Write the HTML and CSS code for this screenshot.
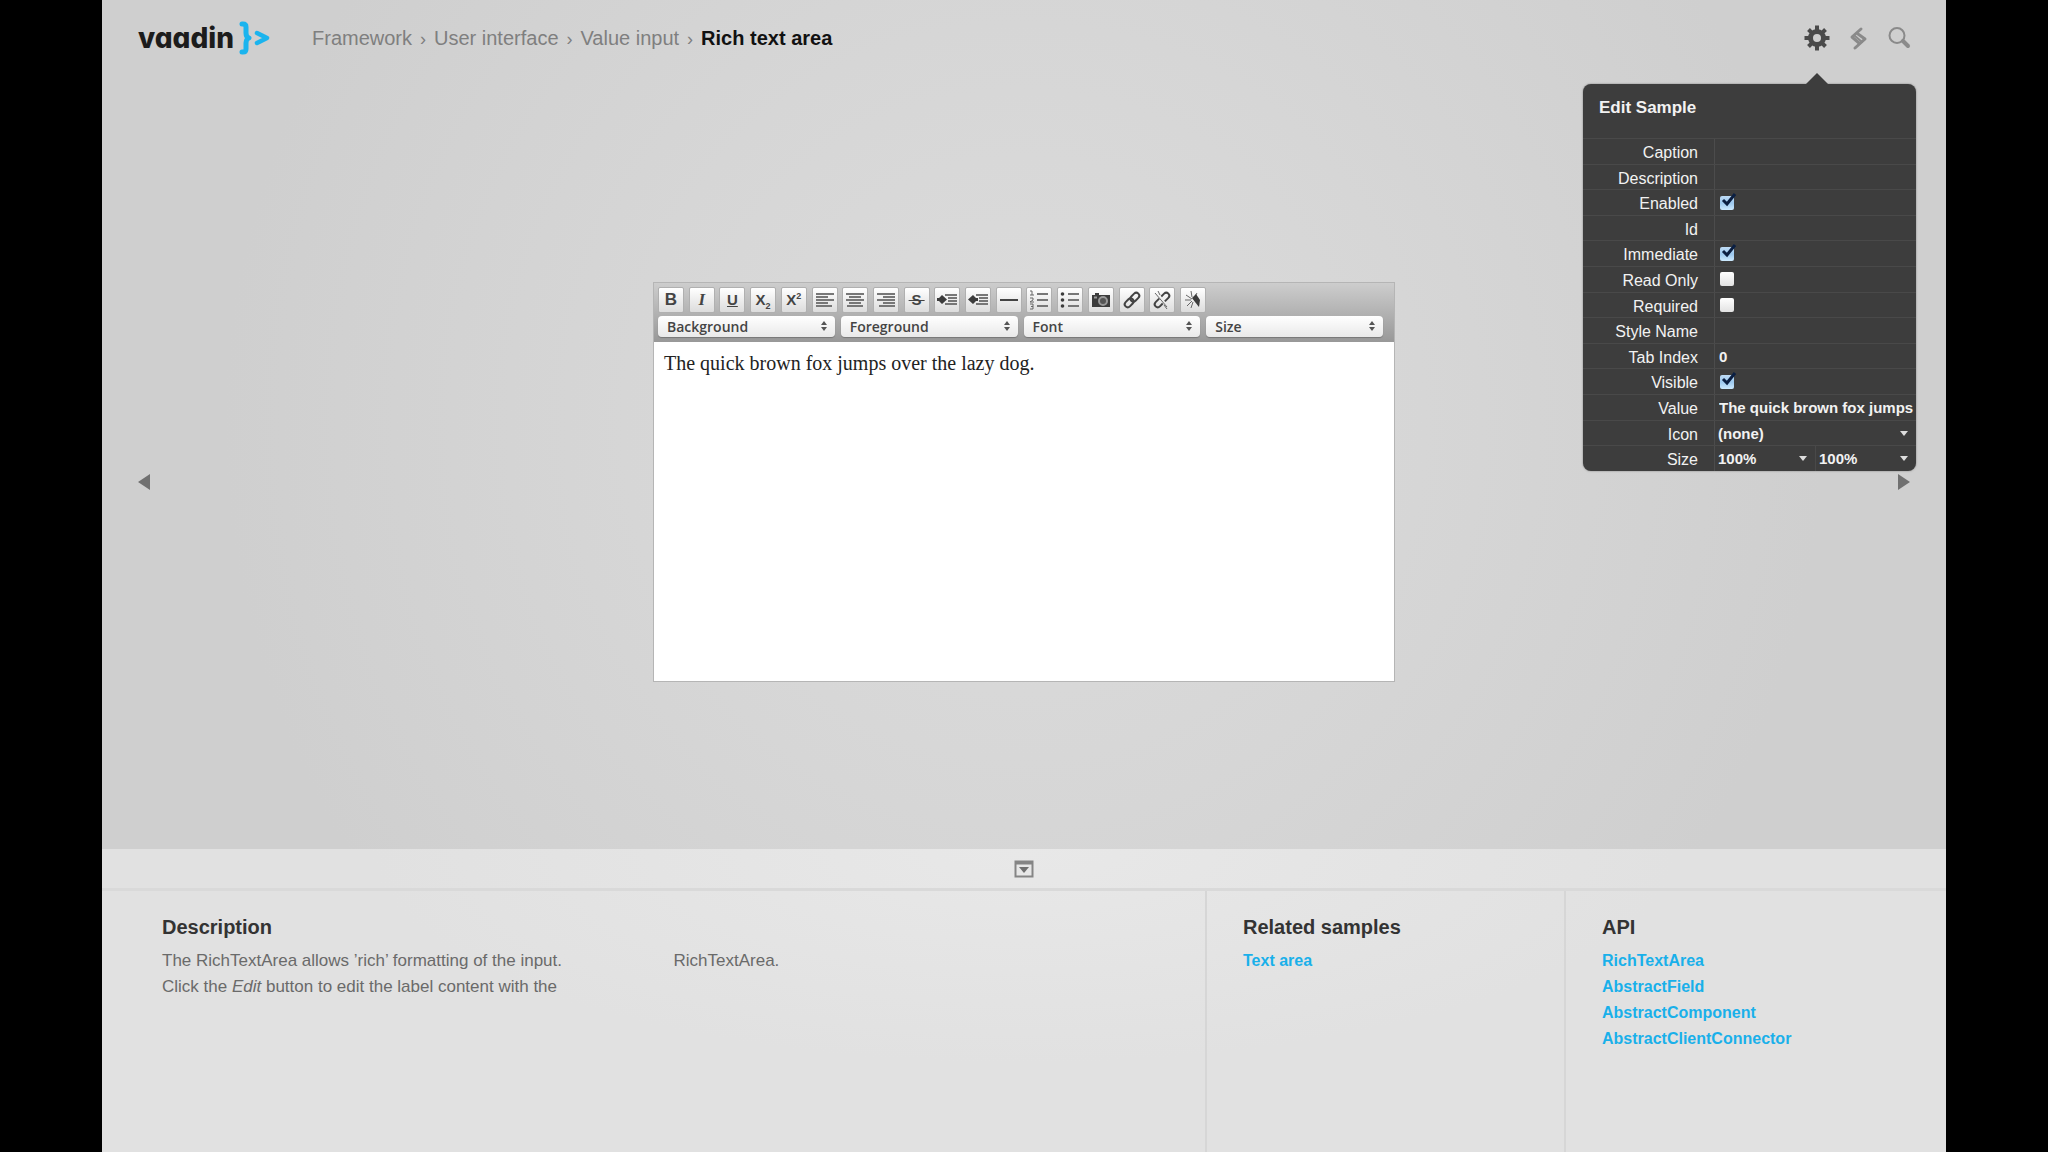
FILE: index.html
```
<!DOCTYPE html>
<html lang="en">
  <head>
    <meta charset="UTF-8" />
    <meta name="viewport" content="width=device-width, initial-scale=1.0" />
    <title>Vaadin Sampler - Rich text area</title>
    <link rel="stylesheet" href="styles.css">
  </head>
  <body>
    <div class="app">
      <section class="stage">
        <header class="header">
          <a class="logo" href="#" aria-label="vaadin">
            <span class="logo-text">vaadin</span>
            <svg width="32" height="34" viewBox="0 0 32 34" fill="none" stroke="#1bb4ee" stroke-width="5" stroke-linecap="round" stroke-linejoin="round">
              <path d="M3 3H4Q7 3 7 6V12Q7 16 10 17Q7 18 7 22V28Q7 31 4 31H3" />
              <path d="M18 12L28 17L18 22" stroke-width="4.500" />
            </svg>
          </a>
          <nav class="breadcrumb">
            <a href="#">Framework</a><span>›</span><a href="#">User interface</a><span>›</span><a href="#">Value input</a><span>›</span><strong>Rich text area</strong>
          </nav>
          <div class="tools">
            <button class="tool active" aria-label="Edit sample">
              <svg width="26" height="26" viewBox="-13 -13 26 26">
                <circle r="6.5" fill="none" stroke="#4a4a4a" stroke-width="5" />
                <g stroke="#4a4a4a" stroke-width="4">
                  <path d="M0 -12.5V-8M0 12.5V8M-12.5 0H-8M12.5 0H8" />
                  <path d="M-8.5 -8.5L-5.6 -5.6M8.5 8.5L5.6 5.6M-8.5 8.5L-5.6 5.6M8.5 -8.5L5.6 -5.6" />
                </g>
              </svg>
            </button>
            <button class="tool" aria-label="Source">
              <svg width="26" height="26" viewBox="0 0 26 26" fill="none" stroke="#8a8a8a" stroke-linecap="round" stroke-linejoin="round">
                <path d="M16 4L7 12L14 18" stroke-width="3" />
                <path d="M13 9L20 14L10 23" stroke-width="3" />
                <path d="M10 11L17 17" stroke-width="2" />
              </svg>
            </button>
            <button class="tool" aria-label="Search">
              <svg width="26" height="26" viewBox="0 0 26 26" fill="none" stroke="#8a8a8a">
                <circle cx="11" cy="10.500" r="7.500" stroke-width="2" />
                <path d="M17 16L22 21" stroke-width="4" stroke-linecap="round" />
              </svg>
            </button>

            <form class="popup">
              <h2>Edit Sample</h2>
              <div class="fields">
                <div class="row"><label for="caption">Caption</label><div class="cell"><input type="text" id="caption"></div></div>
                <div class="row"><label for="description">Description</label><div class="cell"><input type="text" id="description"></div></div>
                <div class="row"><label for="enabled">Enabled</label><div class="cell"><input type="checkbox" id="enabled" checked></div></div>
                <div class="row"><label for="id">Id</label><div class="cell"><input type="text" id="id"></div></div>
                <div class="row"><label for="immediate">Immediate</label><div class="cell"><input type="checkbox" id="immediate" checked></div></div>
                <div class="row"><label for="readonly">Read Only</label><div class="cell"><input type="checkbox" id="readonly"></div></div>
                <div class="row"><label for="required">Required</label><div class="cell"><input type="checkbox" id="required"></div></div>
                <div class="row"><label for="stylename">Style Name</label><div class="cell"><input type="text" id="stylename"></div></div>
                <div class="row"><label for="tabindex">Tab Index</label><div class="cell"><input type="text" id="tabindex" value="0"></div></div>
                <div class="row"><label for="visible">Visible</label><div class="cell"><input type="checkbox" id="visible" checked></div></div>
                <div class="row"><label for="value">Value</label><div class="cell"><input type="text" id="value" value="The quick brown fox jumps"></div></div>
                <div class="row"><label for="icon">Icon</label><div class="cell"><select id="icon"><option>(none)</option></select></div></div>
                <div class="row"><label for="size">Size</label><div class="cell"><select id="size"><option>100%</option></select><select aria-label="Height"><option>100%</option></select></div></div>
              </div>
            </form>
          </div>
        </header>

        <main class="sample">
          <button class="prev" aria-label="Previous sample"></button>
          <div class="editor">
            <div class="toolbar">
              <div class="buttons">
                <button aria-label="Bold"><b>B</b></button>
                <button aria-label="Italic"><i class="serif">I</i></button>
                <button aria-label="Underline"><u>U</u></button>
                <button aria-label="Subscript"><span>X<sub>2</sub></span></button>
                <button aria-label="Superscript"><span>X<sup>2</sup></span></button>
                <button aria-label="Align left"><svg viewBox="0 0 20 20"><path d="M1 4H19M1 7H13M1 10H19M1 13H13M1 16H17" /></svg></button>
                <button aria-label="Align center"><svg viewBox="0 0 20 20"><path d="M1 4H19M4 7H16M1 10H19M4 13H16M2 16H18" /></svg></button>
                <button aria-label="Align right"><svg viewBox="0 0 20 20"><path d="M1 4H19M7 7H19M1 10H19M7 13H19M3 16H19" /></svg></button>
                <button aria-label="Strikethrough"><s>&thinsp;S&thinsp;</s></button>
                <button aria-label="Indent"><svg viewBox="0 0 20 20"><path d="M8 5H20M11 8H20M11 11H20M8 14H20" /><path class="solid" d="M0 8H2L5 5L10 9.500L5 14L2 11H0Z" /></svg></button>
                <button aria-label="Outdent"><svg viewBox="0 0 20 20"><path d="M8 5H20M11 8H20M11 11H20M8 14H20" /><path class="solid" d="M10 8H8L5 5L0 9.500L5 14L8 11H10Z" /></svg></button>
                <button aria-label="Horizontal rule"><svg viewBox="0 0 20 20"><path class="dark" d="M1 10H19" /></svg></button>
                <button aria-label="Ordered list"><svg viewBox="0 0 20 20"><path d="M8 4H19M8 10H19M8 16H19" /><path class="thin" d="M1 1H3V5M1 5H5M1 8H4V10L1 12H5M1 14H4V19H1M2 16.500H4" /></svg></button>
                <button aria-label="Unordered list"><svg viewBox="0 0 20 20"><path d="M8 4H19M8 10H19M8 16H19" /><g class="solid"><circle cx="2.500" cy="4" r="1.800" /><circle cx="2.500" cy="10" r="1.800" /><circle cx="2.500" cy="16" r="1.800" /></g></svg></button>
                <button aria-label="Insert image"><svg viewBox="0 0 20 20"><path class="solid" d="M1 5H4V3H8V5H19V17H1Z" /><circle cx="12" cy="11" r="4" fill="#555" stroke="#999" /><path stroke="#999" d="M3 7.500H6" /></svg></button>
                <button aria-label="Create link"><svg viewBox="0 0 20 20"><g class="link" transform="rotate(-45 10 10)"><rect x="1" y="7" width="10" height="6" rx="3" /><rect x="9" y="7" width="10" height="6" rx="3" /></g></svg></button>
                <button aria-label="Remove link"><svg viewBox="0 0 20 20"><g class="link" transform="rotate(-45 10 10)"><path d="M9 7H4A3 3 0 0 0 4 13H8M11 13H16A3 3 0 0 0 16 7H12" /></g><path class="thin" d="M6 1L8 5M12 15L15 19M3 3L15 17" /></svg></button>
                <button aria-label="Remove formatting"><svg viewBox="0 0 20 20"><path class="thin" d="M3 5L9 9M8 1L9 7M2 10H8M4 16L9 11M14 3L11 8M8 18L10 12M16 15L10 8" /><path class="solid" d="M9 8L13 4L17 10L16 17L12 12Z" /></svg></button>
              </div>
              <div class="selects">
                <select aria-label="Background"><option>Background</option></select>
                <select aria-label="Foreground"><option>Foreground</option></select>
                <select aria-label="Font"><option>Font</option></select>
                <select aria-label="Font size"><option>Size</option></select>
              </div>
            </div>
            <div class="content" contenteditable="true" spellcheck="false">The quick brown fox jumps over the lazy dog.</div>
          </div>
          <button class="next" aria-label="Next sample"></button>
        </main>
      </section>

      <footer class="info">
        <div class="collapse">
          <button aria-label="Hide description">
            <svg width="20" height="18" viewBox="0 0 20 18">
              <path d="M1.500 1.500H18.500V16.500H1.500Z" fill="none" stroke="#858585" stroke-width="2" />
              <path d="M1 3H19" stroke="#858585" stroke-width="3" />
              <path d="M5 7H15L10 13Z" fill="#707070" />
            </svg>
          </button>
        </div>
        <div class="panels">
          <section class="panel">
            <h3>Description</h3>
            <div class="text">
              <p>The RichTextArea allows ’rich’ formatting of the input.<br />Click the <em>Edit</em> button to edit the label content with the</p>
              <p>RichTextArea.</p>
            </div>
          </section>
          <section class="panel">
            <h3>Related samples</h3>
            <ul>
              <li><a href="#">Text area</a></li>
            </ul>
          </section>
          <section class="panel">
            <h3>API</h3>
            <ul>
              <li><a href="#">RichTextArea</a></li>
              <li><a href="#">AbstractField</a></li>
              <li><a href="#">AbstractComponent</a></li>
              <li><a href="#">AbstractClientConnector</a></li>
            </ul>
          </section>
        </div>
      </footer>
    </div>
  </body>
</html>
```
FILE: styles.css
```
* {
  box-sizing: border-box;
}

body {
  margin: 0;
  padding: 0 102px;
  background: #000;
  font-family: "Liberation Sans", Arial, sans-serif;
  font-size: 17px;
  color: #6a6a6a;
}

button {
  padding: 0;
  border: none;
  background: none;
  font-family: inherit;
  cursor: pointer;
}

a {
  text-decoration: none;
}

.app {
  display: flex;
  flex-direction: column;
  min-height: 100vh;
}

.stage {
  flex: 1;
  display: flex;
  flex-direction: column;
  background: radial-gradient(circle at 50% 50%, #dcdcdc 0, #d6d6d6 400px, #cfcfcf 800px);
}

/* header */
.header {
  display: flex;
  align-items: center;
  height: 76px;
  padding: 0 34px 0 36px;
}

.logo {
  display: flex;
  align-items: center;
  gap: 5px;
  width: 174px;
  color: #1c1c1c;
}

.logo-text {
  font-family: Inter, sans-serif;
  font-size: 28px;
  font-weight: 800;
  line-height: 34px;
  font-feature-settings: "cv11";
}

.breadcrumb {
  flex: 1;
  font-size: 20px;
}

.breadcrumb a,
.breadcrumb span {
  color: #7f7f7f;
}

.breadcrumb span {
  margin: 0 8px;
  font-size: 18px;
}

.breadcrumb strong {
  color: #111;
}

.tools {
  position: relative;
  display: flex;
  gap: 15px;
}

.tool {
  display: flex;
}

/* edit popup */
.popup {
  position: absolute;
  top: 59px;
  right: -4px;
  width: 333px;
  background: #3d3d3d;
  border-radius: 8px;
  color: #f2f2f2;
  box-shadow: 0 0 2px #777;
}

.popup::before {
  content: "";
  position: absolute;
  top: -11px;
  right: 88px;
  border: 11px solid transparent;
  border-top: none;
  border-bottom-color: #3d3d3d;
}

.popup h2 {
  margin: 0;
  padding: 12px 16px 0;
  height: 54px;
  font-size: 17px;
  line-height: 24px;
}

.fields {
  display: flex;
  flex-direction: column;
  height: 333px;
}

.row {
  flex: 1;
  display: flex;
  min-height: 0;
  border-top: 1px solid #494949;
}

.row label {
  width: 132px;
  padding-right: 16px;
  border-right: 1px solid #4c4c4c;
  font-size: 16px;
  line-height: 28px;
  text-align: right;
}

.cell {
  flex: 1;
  display: flex;
  align-items: center;
  min-width: 0;
}

.cell input[type="text"],
.cell select {
  flex: 1;
  width: 100%;
  min-width: 0;
  height: 100%;
  padding: 0 0 0 4px;
  border: none;
  background: none;
  font: bold 15px "Liberation Sans", Arial, sans-serif;
  color: #f2f2f2;
}

.cell select {
  appearance: none;
  padding-left: 3px;
  background: url("data:image/svg+xml,%3Csvg xmlns='http://www.w3.org/2000/svg' width='8' height='5'%3E%3Cpath d='M0 0H8L4 5Z' fill='%23ddd'/%3E%3C/svg%3E") no-repeat right 8px center;
}

.cell select + select {
  border-left: 1px solid #494949;
}

.cell input[type="checkbox"] {
  appearance: none;
  width: 14px;
  height: 14px;
  margin: 0 0 0 5px;
  border-radius: 2px;
  background: linear-gradient(#fff, #e2e2e2);
}

.cell input[type="checkbox"]:checked {
  position: relative;
  background: linear-gradient(#bfdcf6, #9cc8ee 50%, #cdeaff);
}

.cell input[type="checkbox"]:checked::before {
  content: "";
  position: absolute;
  top: -4px;
  left: 0;
  width: 18px;
  height: 16px;
  background: url("data:image/svg+xml,%3Csvg xmlns='http://www.w3.org/2000/svg' width='18' height='16'%3E%3Cpath d='M3 8L7 12L15 2' fill='none' stroke='%230b1f42' stroke-width='3'/%3E%3C/svg%3E");
}

/* sample area */
.sample {
  flex: 1;
  display: flex;
  align-items: center;
  justify-content: space-between;
  padding: 38px 36px 0;
}

.prev,
.next {
  border: 8px solid transparent;
}

.prev {
  border-left: none;
  border-right: 12px solid #707070;
}

.next {
  border-right: none;
  border-left: 12px solid #707070;
}

.editor {
  flex: 0 1 742px;
  border: 1px solid #b5b5b5;
  background: #fff;
}

.toolbar {
  padding: 4px 11px 5px 4px;
  background: linear-gradient(#cdcdcd, #989898);
}

.buttons {
  display: flex;
  justify-content: space-between;
  max-width: 548px;
  margin-bottom: 3px;
}

.buttons button {
  display: flex;
  align-items: center;
  justify-content: center;
  width: 26px;
  height: 26px;
  border: 1px solid #b0b0b0;
  border-radius: 2px;
  background: linear-gradient(#fff, #dcdcdc);
  font-size: 17px;
  font-weight: bold;
  line-height: 20px;
  color: #444;
}

.buttons svg {
  width: 20px;
  height: 20px;
  fill: none;
  stroke: #777;
  stroke-width: 2;
}

.buttons .solid {
  fill: #3c3c3c;
  stroke: none;
}

.buttons .dark {
  stroke: #444;
}

.buttons .thin {
  stroke: #666;
  stroke-width: 1;
}

.buttons .link {
  stroke: #444;
}

.buttons .serif {
  font-family: "Liberation Serif", serif;
}

.buttons u,
.buttons s,
.buttons span {
  font-size: 15px;
}

.buttons sub,
.buttons sup {
  font-size: 9px;
  line-height: 0;
}

.selects {
  display: flex;
  gap: 6px;
}

.selects select {
  appearance: none;
  flex: 1;
  min-width: 0;
  height: 21px;
  padding: 0 9px;
  border: none;
  border-radius: 4px;
  background: url("data:image/svg+xml,%3Csvg xmlns='http://www.w3.org/2000/svg' width='6' height='10'%3E%3Cpath d='M0 4L3 0L6 4ZM0 6L3 10L6 6Z' fill='%23555'/%3E%3C/svg%3E") no-repeat right 8px center, linear-gradient(#fff, #e9e9e9);
  box-shadow: 0 1px 1px #777;
  font: 600 14px "Open Sans", sans-serif;
  color: #444;
}

.content {
  min-height: 339px;
  padding: 8px 10px;
  font-family: "Liberation Serif", "Times New Roman", serif;
  font-size: 20px;
  line-height: 26px;
  color: #222;
}

/* description */
.info {
  display: flex;
  flex-direction: column;
  min-height: 303px;
  background: radial-gradient(ellipse at 50% 0, #e8e8e8 0, #e1e1e1 50%);
}

.collapse {
  display: flex;
  justify-content: center;
  align-items: center;
  height: 42px;
  border-bottom: 3px solid #d9d9d9;
}

.collapse button {
  display: flex;
}

.panels {
  flex: 1;
  display: grid;
  grid-template-columns: 1103fr 359fr 382fr;
}

.panel {
  padding: 22px 36px 0;
}

.panel:first-child {
  padding: 22px 60px 0;
}

.panel + .panel {
  border-left: 2px solid #d6d6d6;
}

.panel h3 {
  margin: 0 0 7px;
  font-size: 20px;
  line-height: 28px;
  color: #333;
}

.text {
  display: grid;
  grid-template-columns: 1fr 1fr;
  column-gap: 40px;
  line-height: 26px;
}

.text p {
  margin: 0;
}

.panel ul {
  margin: 0;
  padding: 0;
  list-style: none;
  line-height: 26px;
}

.panel li a {
  color: #19b0ea;
  font-size: 16px;
  font-weight: bold;
}
```
